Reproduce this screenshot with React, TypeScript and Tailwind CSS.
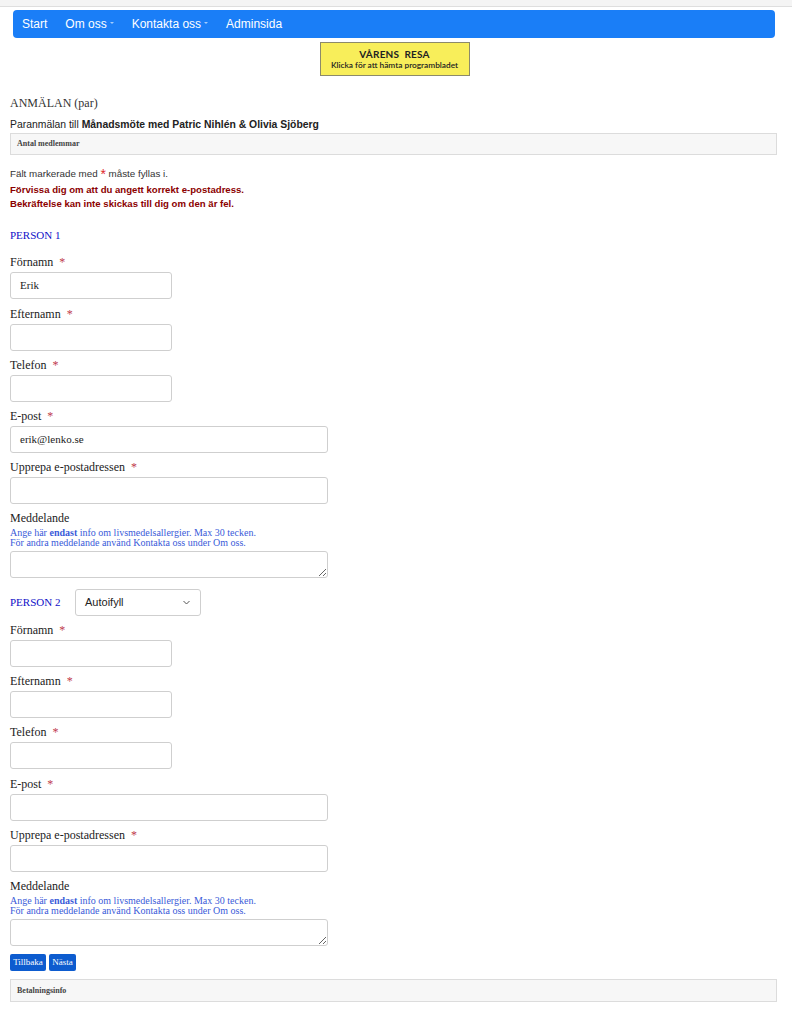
import React from "react";

const serif = "font-['Liberation_Serif','Times_New_Roman',serif]";
const sans = "font-['Liberation_Sans',Arial,sans-serif]";

function Caret() {
  return (
    <span className="ml-[3px] inline-block w-0 h-0 border-t-[2px] border-t-white/60 border-x-[2.5px] border-x-transparent relative top-[-1px]" />
  );
}

function Label({ text, req = true, first = false, tall = false }: { text: string; req?: boolean; first?: boolean; tall?: boolean }) {
  return (
    <div
      className={`${serif} ${first ? "mt-[10px]" : "mt-[5px]"} ${first || tall ? "h-[20px] leading-[20px]" : "h-[19px] leading-[19px]"} text-[12px] text-[#222]`}
    >
      {text}
      {req && <span className="ml-[6px] text-[#c0394b] text-[12px]">*</span>}
    </div>
  );
}

function Input({ wide = false, value = "" }: { wide?: boolean; value?: string }) {
  return (
    <div
      className={`${serif} h-[27px] ${wide ? "w-[318px]" : "w-[162px]"} border border-[#cfcfcf] rounded-[3px] bg-white flex items-center pl-[9px] text-[11px] text-[#222]`}
    >
      {value}
    </div>
  );
}

function Message() {
  return (
    <>
      <Label text="Meddelande" req={false} />
      <div className={`${serif} text-[10px] leading-[10px] text-[#3a5bd9]`}>
        <div>
          Ange här <span className="font-bold">endast</span> info om livsmedelsallergier. Max 30 tecken.
        </div>
        <div>För andra meddelande använd Kontakta oss under Om oss.</div>
      </div>
      <textarea
        className="mt-[3px] block h-[27px] w-[318px] border border-[#cfcfcf] rounded-[3px] bg-white resize-y outline-none"
        defaultValue=""
      />
    </>
  );
}

function Person({ first }: { first: boolean }) {
  return (
    <>
      <Label text="Förnamn" first={first} />
      <Input value={first ? "Erik" : ""} />
      <Label text="Efternamn" tall={first} />
      <Input />
      <Label text="Telefon" />
      <Input />
      <Label text="E-post" tall={!first} />
      <Input wide value={first ? "erik@lenko.se" : ""} />
      <Label text="Upprepa e-postadressen" />
      <Input wide />
      <Message />
    </>
  );
}

export default function App() {
  return (
    <div className="bg-white min-h-[1013px] w-[792px] overflow-hidden">
      <div className="h-[7px] bg-[#f4f4f4] border-b border-[#dedede]" />
      <div className="pl-[10px] pr-[15px]">
        <nav className={`${sans} mt-[3px] ml-[3px] mr-[2px] h-[28px] bg-[#1a7ef7] rounded-[4px] flex items-center text-white text-[12px]`}>
          <div className="pl-[9px] flex items-center">
            <span className="pr-[9px]">Start</span>
            <span className="px-[9px] flex items-center">
              Om oss
              <Caret />
            </span>
            <span className="px-[9px] flex items-center">
              Kontakta oss
              <Caret />
            </span>
            <span className="px-[9px]">Adminsida</span>
          </div>
        </nav>

        <div className="flex justify-center mt-[4px] pl-[2px]">
          <div className="w-[150px] h-[34px] bg-[#f8ee5a] border border-[#8c8a6a] flex flex-col items-center justify-center font-['Lato','Open_Sans',sans-serif] text-[#222]">
            <div className="text-[10px] font-bold leading-[12px] tracking-[0.2px]">VÅRENS&nbsp; RESA</div>
            <div className="text-[8.3px] font-semibold leading-[11px]">Klicka för att hämta programbladet</div>
          </div>
        </div>

        <div className={`${serif} mt-[20px] text-[12px] leading-[14px] text-[#333]`}>ANMÄLAN (par)</div>
        <div className={`${sans} mt-[8px] text-[10.4px] leading-[13px] text-[#222]`}>
          Paranmälan till <span className="font-bold">Månadsmöte med Patric Nihlén &amp; Olivia Sjöberg</span>
        </div>
        <div className={`${serif} mt-[2px] h-[22px] bg-[#f7f7f7] border border-[#dcdcdc] flex items-center pl-[6px] text-[8px] font-bold text-[#444]`}>
          Antal medlemmar
        </div>

        <div className={`${sans} mt-[12px] text-[9.8px] leading-[14px] text-[#333]`}>
          Fält markerade med <span className="text-[#e0262b] text-[14px] leading-[10px] relative top-[2px]">*</span> måste fyllas i.
        </div>
        <div className={`${sans} mt-[2px] text-[9.6px] leading-[14px] font-bold text-[#8b0000]`}>
          <div>Förvissa dig om att du angett korrekt e-postadress.</div>
          <div>Bekräftelse kan inte skickas till dig om den är fel.</div>
        </div>

        <div className={`${serif} mt-[17px] text-[11px] leading-[14px] text-[#1010c8]`}>PERSON 1</div>
        <Person first />

        <div className="mt-[11px] flex items-center h-[27px]">
          <div className={`${serif} text-[11px] text-[#1010c8] w-[65px]`}>PERSON 2</div>
          <div className={`${sans} h-[27px] w-[126px] border border-[#cfcfcf] rounded-[3px] flex items-center justify-between pl-[9px] pr-[10px] text-[11px] text-[#222]`}>
            <span>Autoifyll</span>
            <svg width="7" height="5" viewBox="0 0 7 5" fill="none">
              <polyline points="0.5,1 3.5,4 6.5,1" stroke="#555" strokeWidth="1" />
            </svg>
          </div>
        </div>
        <Person first={false} />

        <div className={`${serif} mt-[8px] flex gap-[3px]`}>
          <div className="h-[17px] w-[36px] bg-[#0d5ccf] rounded-[2px] text-white text-[9px] flex items-center justify-center">Tillbaka</div>
          <div className="h-[17px] w-[27px] bg-[#0d5ccf] rounded-[2px] text-white text-[9px] flex items-center justify-center">Nästa</div>
        </div>
        <div className={`${serif} mt-[8px] h-[23px] bg-[#f7f7f7] border border-[#dcdcdc] flex items-center pl-[6px] text-[8px] font-bold text-[#444]`}>
          Betalningsinfo
        </div>
      </div>
    </div>
  );
}
